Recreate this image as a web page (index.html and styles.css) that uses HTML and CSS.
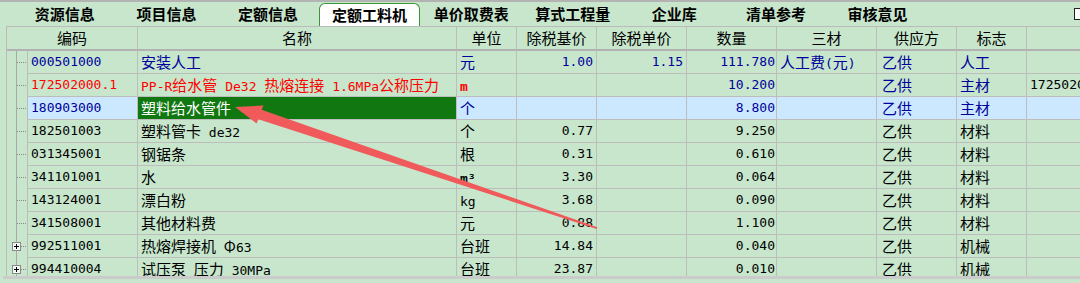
FILE: index.html
```html
<!DOCTYPE html>
<html lang="zh-CN">
<head>
  <meta charset="UTF-8" />
  <title>定额工料机</title>
  <link rel="stylesheet" href="styles.css">
</head>
<body>
  <div class="page">
    <div class="tabs">
      <div class="tab">资源信息</div>
      <div class="tab">项目信息</div>
      <div class="tab">定额信息</div>
      <div class="tab active">定额工料机</div>
      <div class="tab">单价取费表</div>
      <div class="tab">算式工程量</div>
      <div class="tab">企业库</div>
      <div class="tab">清单参考</div>
      <div class="tab">审核意见</div>
      <div class="check"></div>
    </div>

    <div class="grid">
      <div class="row head">
        <div class="cell code">编码</div>
        <div class="cell">名称</div>
        <div class="cell">单位</div>
        <div class="cell">除税基价</div>
        <div class="cell">除税单价</div>
        <div class="cell">数量</div>
        <div class="cell">三材</div>
        <div class="cell">供应方</div>
        <div class="cell">标志</div>
        <div class="cell"></div>
      </div>

      <div class="row blue">
        <div class="gut"></div>
        <div class="cell mono">000501000</div>
        <div class="cell">安装人工</div>
        <div class="cell">元</div>
        <div class="cell num">1.00</div>
        <div class="cell num">1.15</div>
        <div class="cell num q">111.780</div>
        <div class="cell">人工费<span class="lat">(</span>元<span class="lat">)</span></div>
        <div class="cell sup">乙供</div>
        <div class="cell">人工</div>
        <div class="cell"></div>
      </div>

      <div class="row blue">
        <div class="gut"></div>
        <div class="cell mono red">172502000.1</div>
        <div class="cell red"><span class="lat">PP-R</span>给水管<span class="lat"> De32 </span>热熔连接<span class="lat"> 1.6MPa</span>公称压力</div>
        <div class="cell red"><span class="lat bold">m</span></div>
        <div class="cell num"></div>
        <div class="cell num"></div>
        <div class="cell num q">10.200</div>
        <div class="cell"></div>
        <div class="cell sup">乙供</div>
        <div class="cell">主材</div>
        <div class="cell mono black">172502000.1</div>
      </div>

      <div class="row blue sel">
        <div class="gut"></div>
        <div class="cell mono">180903000</div>
        <div class="cell pick">塑料给水管件</div>
        <div class="cell">个</div>
        <div class="cell num"></div>
        <div class="cell num"></div>
        <div class="cell num q">8.800</div>
        <div class="cell"></div>
        <div class="cell sup">乙供</div>
        <div class="cell">主材</div>
        <div class="cell"></div>
      </div>

      <div class="row">
        <div class="gut"></div>
        <div class="cell mono">182501003</div>
        <div class="cell">塑料管卡<span class="lat"> de32</span></div>
        <div class="cell">个</div>
        <div class="cell num">0.77</div>
        <div class="cell num"></div>
        <div class="cell num q">9.250</div>
        <div class="cell"></div>
        <div class="cell sup">乙供</div>
        <div class="cell">材料</div>
        <div class="cell"></div>
      </div>

      <div class="row">
        <div class="gut"></div>
        <div class="cell mono">031345001</div>
        <div class="cell">钢锯条</div>
        <div class="cell">根</div>
        <div class="cell num">0.31</div>
        <div class="cell num"></div>
        <div class="cell num q">0.610</div>
        <div class="cell"></div>
        <div class="cell sup">乙供</div>
        <div class="cell">材料</div>
        <div class="cell"></div>
      </div>

      <div class="row">
        <div class="gut"></div>
        <div class="cell mono">341101001</div>
        <div class="cell">水</div>
        <div class="cell"><span class="lat bold">m³</span></div>
        <div class="cell num">3.30</div>
        <div class="cell num"></div>
        <div class="cell num q">0.064</div>
        <div class="cell"></div>
        <div class="cell sup">乙供</div>
        <div class="cell">材料</div>
        <div class="cell"></div>
      </div>

      <div class="row">
        <div class="gut"></div>
        <div class="cell mono">143124001</div>
        <div class="cell">漂白粉</div>
        <div class="cell"><span class="lat">kg</span></div>
        <div class="cell num">3.68</div>
        <div class="cell num"></div>
        <div class="cell num q">0.090</div>
        <div class="cell"></div>
        <div class="cell sup">乙供</div>
        <div class="cell">材料</div>
        <div class="cell"></div>
      </div>

      <div class="row">
        <div class="gut"></div>
        <div class="cell mono">341508001</div>
        <div class="cell">其他材料费</div>
        <div class="cell">元</div>
        <div class="cell num">0.88</div>
        <div class="cell num"></div>
        <div class="cell num q">1.100</div>
        <div class="cell"></div>
        <div class="cell sup">乙供</div>
        <div class="cell">材料</div>
        <div class="cell"></div>
      </div>

      <div class="row">
        <div class="gut">
          <svg class="plus" width="9" height="9" viewBox="0 0 9 9"><rect x="0.5" y="0.5" width="8" height="8" fill="#f2f7f2" stroke="#8a8a8a"/><path d="M2 4.5h5M4.5 2v5" stroke="#000"/></svg>
        </div>
        <div class="cell mono">992511001</div>
        <div class="cell">热熔焊接机<span class="lat"> </span>Φ<span class="lat">63</span></div>
        <div class="cell">台班</div>
        <div class="cell num">14.84</div>
        <div class="cell num"></div>
        <div class="cell num q">0.040</div>
        <div class="cell"></div>
        <div class="cell sup">乙供</div>
        <div class="cell">机械</div>
        <div class="cell"></div>
      </div>

      <div class="row">
        <div class="gut">
          <svg class="plus" width="9" height="9" viewBox="0 0 9 9"><rect x="0.5" y="0.5" width="8" height="8" fill="#f2f7f2" stroke="#8a8a8a"/><path d="M2 4.5h5M4.5 2v5" stroke="#000"/></svg>
        </div>
        <div class="cell mono">994410004</div>
        <div class="cell">试压泵<span class="lat"> </span>压力<span class="lat"> 30MPa</span></div>
        <div class="cell">台班</div>
        <div class="cell num">23.87</div>
        <div class="cell num"></div>
        <div class="cell num q">0.010</div>
        <div class="cell"></div>
        <div class="cell sup">乙供</div>
        <div class="cell">机械</div>
        <div class="cell"></div>
      </div>
    </div>

    <div class="hbar"></div>

    <!-- annotation arrow drawn over the grid -->
    <svg class="arrow" width="1080" height="283" viewBox="0 0 1080 283">
      <polygon points="235,107 263.5,105.5 261.6,109.8 597.3,227.2 596.7,228.9 258.4,119.2 256.5,123.5" fill="#f05a5a"/>
    </svg>
  </div>
</body>
</html>
```

FILE: styles.css
```css
body {
  margin: 0;
  background: #c7e6cc;
  font-family: "Noto Sans CJK SC", sans-serif;
  overflow: hidden;
}
.page {
  position: relative;
  width: 1080px;
  height: 283px;
  box-sizing: border-box;
  border-top: 2px solid #b3b3b3;
  background: #c7e6cc;
  overflow: hidden;
}

/* tab strip */
.tabs {
  display: flex;
  height: 24px;
  padding-left: 14px;
}
.tab {
  flex: none;
  width: 101.6px;
  text-align: center;
  font-size: 15px;
  font-weight: 700;
  line-height: 24px;
  color: #000;
}
.tab.active {
  box-sizing: border-box;
  margin-top: 1px;
  background: #fff;
  border: 1px solid #3a943a;
  border-bottom: 0;
  border-radius: 6px 6px 0 0;
  line-height: 22px;
}
.check {
  flex: none;
  margin: 6px -6px 0 auto;
  width: 10px;
  height: 10px;
  border: 1px solid #222;
  background: #fff;
}

/* data grid */
.grid {
  margin-left: 6px;
  height: 249px;
  border-left: 1px solid #bbb;
  border-top: 1px solid #bbb;
  overflow: hidden;
}
.row {
  display: grid;
  grid-template-columns: 21px 110px 319px 60px 80px 90px 90px 100px 80px 70px 100px;
  height: 23px;
  color: #000;
}
.row.head {
  height: 24px;
}
.cell {
  border-right: 1px solid #bdbdbd;
  border-bottom: 1px solid #bdbdbd;
  padding: 0 3px;
  font-size: 15px;
  line-height: 22px;
  white-space: nowrap;
  overflow: hidden;
}
.head .cell {
  border-bottom: 2px solid #b2b2b2;
  text-align: center;
  line-height: 22px;
}
.head .code {
  grid-column: span 2;
}
.gut {
  border-right: 1px solid #bdbdbd;
  background:
    linear-gradient(#a8a8a8, #a8a8a8) 9px 0 / 1px 100% no-repeat,
    repeating-linear-gradient(90deg, #8a8a8a 0 1px, transparent 1px 2px) 10px 11px / 10px 1px no-repeat;
}
.plus {
  display: block;
  margin: 7px 0 0 5px;
}

.mono,
.num,
.lat {
  font-family: "DejaVu Sans Mono", monospace;
  font-size: 13px;
}
.bold {
  font-weight: 700;
}
.num {
  text-align: right;
}
.num.q {
  padding-right: 1px;
}
.sup {
  padding-left: 5px;
}

.blue {
  color: #00009c;
}
.red {
  color: #f00;
}
.black {
  color: #000;
}
.sel .cell {
  background: #cce8ff;
}
.sel .pick {
  background: #117811;
  color: #fff;
}

.hbar {
  height: 3px;
  margin-left: 3px;
  background: #cbcbcb;
}

.arrow {
  position: absolute;
  left: 0;
  top: -2px;
  pointer-events: none;
}
```
